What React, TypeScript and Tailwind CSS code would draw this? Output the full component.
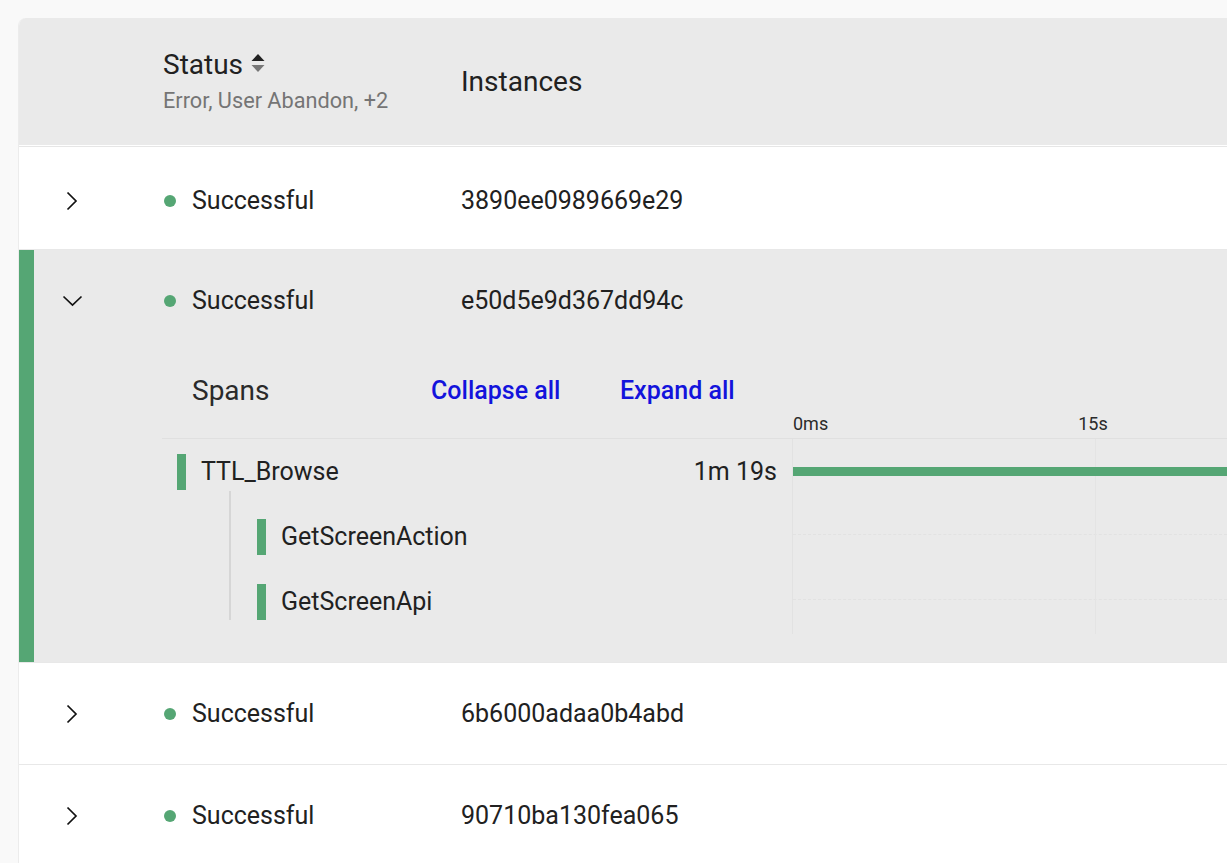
import React from "react";

type Instance = {
  id: string;
  status: string;
  expanded?: boolean;
};

const instances: Instance[] = [
  { id: "3890ee0989669e29", status: "Successful" },
  { id: "e50d5e9d367dd94c", status: "Successful", expanded: true },
  { id: "6b6000adaa0b4abd", status: "Successful" },
  { id: "90710ba130fea065", status: "Successful" },
];

function ChevronRight() {
  return (
    <svg width="12" height="20" viewBox="0 0 12 20" fill="none">
      <path d="M1.5 1.5 L10 10 L1.5 18.5" stroke="#111" strokeWidth="1.7" />
    </svg>
  );
}

function ChevronDown() {
  return (
    <svg width="21" height="12" viewBox="0 0 21 12" fill="none">
      <path d="M1.5 1.5 L10.5 10 L19.5 1.5" stroke="#111" strokeWidth="1.7" />
    </svg>
  );
}

function SortIcon() {
  return (
    <svg width="14" height="22" viewBox="0 0 14 22">
      <path d="M0.5 8 L7 1 L13.5 8 Z" fill="#222" />
      <path d="M0.5 12 L7 19 L13.5 12 Z" fill="#777" />
    </svg>
  );
}

function StatusCell({ status }: { status: string }) {
  return (
    <div className="flex w-[298px] items-center">
      <span className="ml-[1px] h-[12px] w-[12px] rounded-full bg-[#55a674]" />
      <span className="ml-[16px] text-[25px]">{status}</span>
    </div>
  );
}

// span tree + timeline under the expanded instance
function Spans() {
  return (
    <div className="pb-[28px] pl-[128px]">
      <div className="mt-[19px] flex h-[42px] items-center">
        <span className="ml-[30px] w-[239px] text-[28px] text-[#2a2a2a]">Spans</span>
        <button className="w-[189px] text-left text-[25px] font-medium text-[#1313dc]">Collapse all</button>
        <button className="text-[25px] font-medium text-[#1313dc]">Expand all</button>
      </div>
      <div className="flex h-[26px] items-center pb-[4px]">
        <div className="w-[630px]" />
        <span className="ml-[1px] text-[18px] text-[#2a2a2a]">0ms</span>
        <span className="ml-[250px] text-[18px] text-[#2a2a2a]">15s</span>
      </div>
      <div className="flex border-t border-[#e0e0e0]">
        <div className="w-[630px]">
          <div className="flex h-[65px] items-center">
            <span className="ml-[15px] h-[36px] w-[9px] bg-[#55a674]" />
            <span className="ml-[15px] flex-1 text-[25px]">TTL_Browse</span>
            <span className="mr-[15px] text-[25px]">1m 19s</span>
          </div>
          <div className="relative">
            <div className="absolute left-[67px] top-[-13px] bottom-[14px] w-[2px] bg-[#d6d6d6]" />
            {["GetScreenAction", "GetScreenApi"].map((name) => (
              <div key={name} className="flex h-[65px] items-center">
                <span className="ml-[95px] h-[36px] w-[9px] bg-[#55a674]" />
                <span className="ml-[15px] text-[25px]">{name}</span>
              </div>
            ))}
          </div>
        </div>
        <div className="relative flex-1 border-l border-[#e2e2e2]">
          <div className="absolute left-[302px] top-0 bottom-0 w-px bg-[#e4e4e4]" />
          <div className="flex h-[65px] items-center">
            <div className="relative h-[9px] w-full bg-[#55a674]" />
          </div>
          <div className="h-[65px] pt-[30px]">
            <div className="border-t border-dashed border-[#e2e2e2]" />
          </div>
          <div className="h-[65px] pt-[30px]">
            <div className="border-t border-dashed border-[#e2e2e2]" />
          </div>
        </div>
      </div>
    </div>
  );
}

function InstanceRow({ item, first }: { item: Instance; first: boolean }) {
  if (item.expanded) {
    return (
      <div className="flex border-b border-[#e8e8e8] bg-[#eaeaea]">
        <div className="w-[15px] bg-[#55a674]" />
        <div className="flex-1">
          <div className="flex h-[101px] items-center">
            <div className="w-[129px] pl-[28px]">
              <ChevronDown />
            </div>
            <StatusCell status={item.status} />
            <span className="text-[25px]">{item.id}</span>
          </div>
          <Spans />
        </div>
      </div>
    );
  }
  return (
    <div className={`flex h-[102px] items-center border-b border-[#e8e8e8] bg-white ${first ? "pt-[5px]" : ""}`}>
      <div className="w-[144px] pl-[47px]">
        <ChevronRight />
      </div>
      <StatusCell status={item.status} />
      <span className="text-[25px]">{item.id}</span>
    </div>
  );
}

export default function App() {
  return (
    <div className="min-h-screen overflow-hidden bg-[#f9f9f9] pl-[18px] pt-[18px] font-['Roboto',sans-serif] text-[#212121]">
      <div className="min-h-[845px] overflow-hidden rounded-tl-lg border-l border-[#ececec] bg-white">
        <div className="flex h-[127px] items-center bg-[#eaeaea]">
          <div className="w-[144px]" />
          <div className="w-[298px]">
            <div className="flex items-center leading-[30px]">
              <span className="text-[28px]">Status</span>
              <span className="ml-[8px] mt-[-2px]">
                <SortIcon />
              </span>
            </div>
            <div className="mt-[9px] text-[21.7px] leading-[24px] text-[#757575]">Error, User Abandon, +2</div>
          </div>
          <span className="text-[28px]">Instances</span>
        </div>
        <div className="h-px bg-white" />
        <div className="h-px bg-[#e6e6e6]" />
        <div className="h-px bg-white" />
        {instances.map((item, i) => (
          <InstanceRow key={item.id} item={item} first={i === 0} />
        ))}
      </div>
    </div>
  );
}
